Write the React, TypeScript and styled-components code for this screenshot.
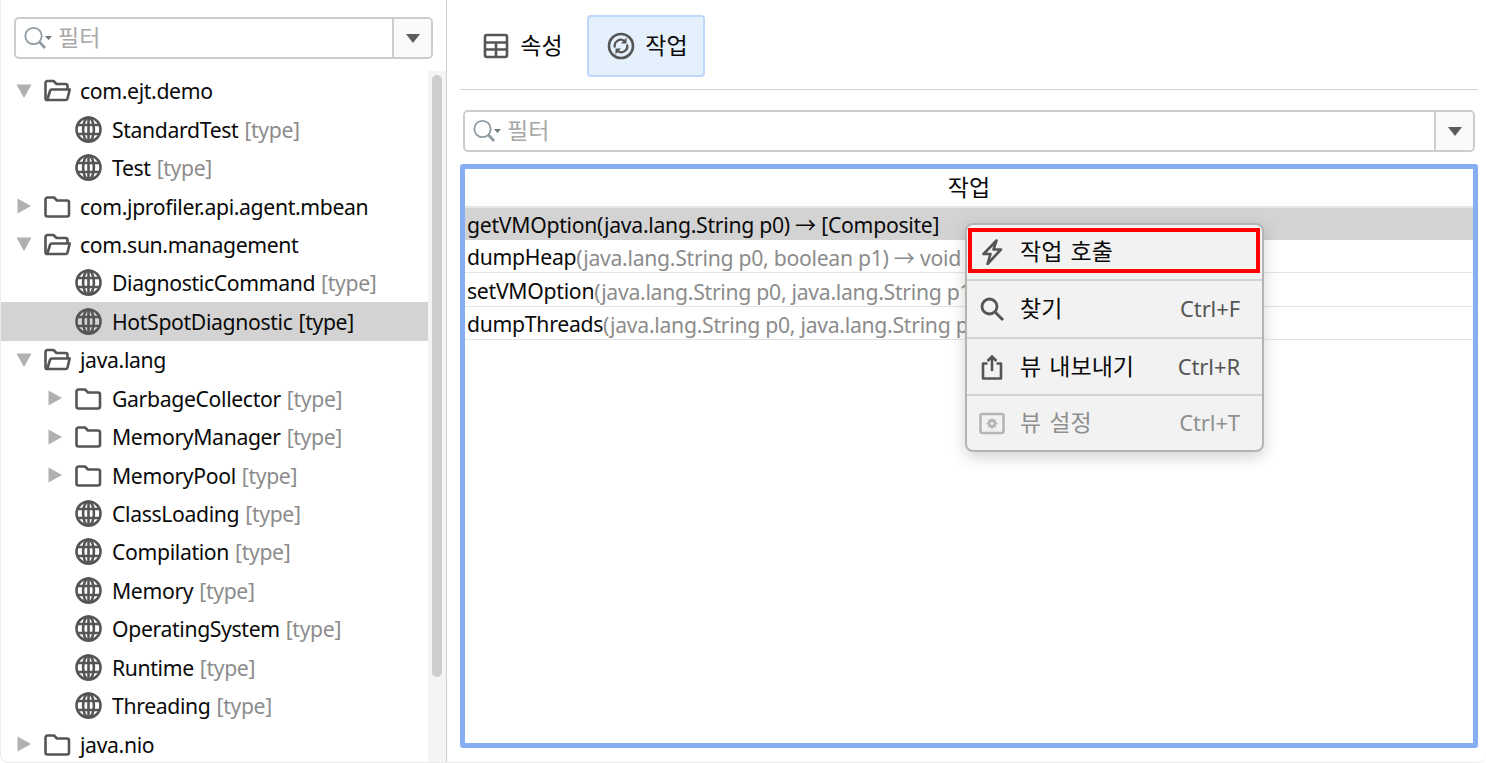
import React from 'react';
import styled, { createGlobalStyle } from 'styled-components';

const Global = createGlobalStyle`
  html, body { margin: 0; padding: 0; background: #fff; overflow: hidden; }
  #root { width: 1486px; height: 763px; }
  * { box-sizing: border-box; }
`;

const FONT = `"Noto Sans", "Noto Sans CJK KR", sans-serif`;
const KR = `"Noto Sans CJK KR", sans-serif`;

const Frame = styled.div`
  position: relative;
  width: 1486px;
  height: 763px;
  display: flex;
  background: #fff;
  font-family: ${FONT};
  font-size: 21.2px;
  letter-spacing: -0.35px;
  color: #0a0a0a;
  border-left: 1px solid #ececec;
  border-bottom: 1px solid #ececec;
  border-radius: 0 8px 8px 8px;
  overflow: hidden;
`;

const Left = styled.aside`
  width: 446px;
  flex: none;
  display: flex;
  flex-direction: column;
  border-right: 1px solid #cfcfcf;
  padding-top: 17px;
`;

const KrLabel = styled.span`
  display: block;
  padding-bottom: 4px;
`;

const FilterBox = styled.div<{ $indent: number }>`
  height: 42px;
  flex: none;
  margin: 0 ${(p) => p.$indent}px;
  display: flex;
  background: #fff;
  border: 2px solid #cdcdcd;
  border-radius: 5px;
  overflow: hidden;
`;

const FilterField = styled.div`
  flex: 1;
  display: flex;
  align-items: center;
  padding-left: 7px;
  gap: 5px;
  color: #a9a9a9;
  font-family: ${KR};
  letter-spacing: 0;
  font-size: 23px;
`;

const FilterDrop = styled.div`
  width: 39px;
  flex: none;
  display: flex;
  align-items: center;
  justify-content: center;
  background: #fafafa;
  border-left: 2px solid #cdcdcd;
`;

const DropArrow = styled.div`
  width: 0;
  height: 0;
  border-left: 7.5px solid transparent;
  border-right: 7.5px solid transparent;
  border-top: 9px solid #5c5c5c;
`;

const TreeArea = styled.div`
  flex: 1;
  display: flex;
  margin-top: 12px;
  min-height: 0;
`;

const Tree = styled.div`
  flex: 1;
  padding-top: 0.5px;
  overflow: hidden;
`;

const Scrollbar = styled.div`
  width: 18px;
  flex: none;
  background: #f4f4f4;
  padding: 4px 4px 0 4px;
`;

const Thumb = styled.div`
  height: 602px;
  background: #cdcdcd;
  border-radius: 5px;
`;

const TreeRow = styled.div<{ $depth: number; $selected?: boolean }>`
  height: 38.45px;
  display: flex;
  align-items: center;
  padding-left: ${(p) => 15 + p.$depth * 31}px;
  background: ${(p) => (p.$selected ? '#d3d3d3' : 'transparent')};
  white-space: nowrap;
`;

const ArrowSlot = styled.span`
  width: 28px;
  flex: none;
  display: flex;
  align-items: center;
`;

const RowIcon = styled.svg<{ $depth: number }>`
  width: 27px;
  height: 27px;
  flex: none;
  margin-right: ${(p) => (p.$depth ? 10 : 9)}px;
  fill: none;
  stroke: #555;
  stroke-width: 2.6;
  stroke-linejoin: round;
`;

const TypeTag = styled.span<{ $selected?: boolean }>`
  color: ${(p) => (p.$selected ? '#0a0a0a' : '#8c8c8c')};
  margin-left: 6px;
`;

const Right = styled.main`
  flex: 1;
  min-width: 0;
  display: flex;
  flex-direction: column;
  padding: 15px 8px 14px 13px;
`;

const TabBar = styled.div`
  height: 75px;
  flex: none;
  display: flex;
  padding-left: 6px;
  gap: 4px;
  border-bottom: 1px solid #d2d2d2;
`;

const Tab = styled.div<{ $active?: boolean }>`
  height: 62px;
  width: ${(p) => (p.$active ? 118 : 117)}px;
  display: flex;
  align-items: center;
  justify-content: center;
  gap: 10px;
  padding-left: ${(p) => (p.$active ? 3 : 0)}px;
  padding-right: ${(p) => (p.$active ? 0 : 4)}px;
  font-family: ${KR};
  letter-spacing: 0;
  font-size: 23px;
  border: 2px solid ${(p) => (p.$active ? '#bcd8fb' : 'transparent')};
  border-radius: 4px;
  background: ${(p) => (p.$active ? '#e5f0fd' : 'transparent')};
`;

const TabIcon = styled.svg`
  width: 28px;
  height: 28px;
  flex: none;
  fill: none;
  stroke: #555;
  stroke-width: 2.6;
  stroke-linejoin: round;
`;

const TabGap = styled.div`
  height: 20px;
  flex: none;
`;

const TableFrame = styled.div`
  flex: 1;
  min-height: 0;
  margin-top: 12px;
  border: 5px solid #85aef5;
  border-radius: 3px;
  background: #fff;
`;

const TableHead = styled.div`
  height: 39px;
  display: flex;
  align-items: center;
  justify-content: center;
  font-family: ${KR};
  letter-spacing: 0;
  font-size: 23px;
  border-bottom: 2px solid #e6e6e6;
`;

const TableRow = styled.div<{ $selected?: boolean }>`
  height: ${(p) => (p.$selected ? 32 : 33.4)}px;
  display: flex;
  align-items: center;
  padding-left: 2px;
  padding-top: ${(p) => (p.$selected ? 0 : 1)}px;
  padding-bottom: ${(p) => (p.$selected ? 2 : 0)}px;
  letter-spacing: -0.28px;
  background: ${(p) => (p.$selected ? '#d3d3d3' : '#fff')};
  border-bottom: ${(p) => (p.$selected ? 'none' : '1.6px solid #e4e4e4')};
  white-space: nowrap;
  overflow: hidden;
`;

const Signature = styled.span`
  color: #8c8c8c;
`;

const Menu = styled.div`
  position: absolute;
  left: 964px;
  top: 223px;
  width: 299px;
  height: 229px;
  display: flex;
  flex-direction: column;
  background: #f2f2f2;
  border: 2px solid #b4b4b4;
  border-radius: 8px;
  box-shadow: 0 5px 16px rgba(0, 0, 0, 0.18);
`;

const MenuItem = styled.div<{ $disabled?: boolean; $h: number }>`
  height: ${(p) => p.$h}px;
  flex: none;
  display: flex;
  align-items: center;
  padding: 0 22px 0 12px;
  font-family: ${KR};
  letter-spacing: 0;
  font-size: 23px;
  word-spacing: 3px;
  color: ${(p) => (p.$disabled ? '#8f8f8f' : '#0a0a0a')};
`;

const MenuIcon = styled.svg<{ $disabled?: boolean }>`
  width: 26px;
  height: 26px;
  flex: none;
  margin-right: 15px;
  fill: none;
  stroke: ${(p) => (p.$disabled ? '#b5b5b5' : '#555')};
  stroke-width: 2.6;
  stroke-linejoin: round;
`;

const Shortcut = styled.span<{ $disabled?: boolean }>`
  margin-left: auto;
  padding-bottom: 2px;
  font-family: ${FONT};
  letter-spacing: -0.1px;
  word-spacing: 0;
  font-size: 22px;
  color: ${(p) => (p.$disabled ? '#8f8f8f' : '#555')};
`;

const MenuSep = styled.div`
  height: 2px;
  flex: none;
  background: #d3d3d3;
`;

const Callout = styled.div`
  position: absolute;
  left: 967px;
  top: 228px;
  width: 292px;
  height: 45px;
  border: 4px solid #ff0000;
`;

const SearchIcon = () => (
  <svg width="30" height="26" viewBox="0 0 30 26" fill="none">
    <circle cx="10.5" cy="11" r="8.2" stroke="#8f9ba1" strokeWidth="1.8" />
    <path d="M16.5 17 L22 23" stroke="#8f9ba1" strokeWidth="2.6" />
    <path d="M22 11 h7 l-3.5 4 z" fill="#6d7a80" />
  </svg>
);

const Filter = ({ indent }: { indent: number }) => (
  <FilterBox $indent={indent}>
    <FilterField>
      <SearchIcon />
      <KrLabel>필터</KrLabel>
    </FilterField>
    <FilterDrop>
      <DropArrow />
    </FilterDrop>
  </FilterBox>
);

const TriangleDown = () => (
  <svg width="16" height="14" viewBox="0 0 16 14">
    <path d="M0.5 0.5 H15.5 L8 14 Z" fill="#b0b0b0" />
  </svg>
);

const TriangleRight = () => (
  <svg width="16" height="16" viewBox="0 0 16 16">
    <path d="M1.5 0.5 L15 8 L1.5 15.5 Z" fill="#b0b0b0" />
  </svg>
);

type Kind = 'open' | 'closed' | 'leaf';

const KindIcon = ({ kind, depth }: { kind: Kind; depth: number }) => {
  if (kind === 'leaf') {
    return (
      <RowIcon $depth={depth} viewBox="0 0 27 27">
        <circle cx="13.5" cy="13.5" r="12" />
        <ellipse cx="13.5" cy="13.5" rx="5.4" ry="12" />
        <path d="M13.5 1.5 V25.5 M2.8 9 H24.2 M2.8 18 H24.2" />
      </RowIcon>
    );
  }
  if (kind === 'closed') {
    return (
      <RowIcon $depth={depth} viewBox="0 0 27 27">
        <path d="M1.5 6.5 a2 2 0 0 1 2-2 h6.5 l3 3 h10 a2 2 0 0 1 2 2 v12 a2 2 0 0 1-2 2 h-19.5 a2 2 0 0 1-2-2 z" />
      </RowIcon>
    );
  }
  return (
    <RowIcon $depth={depth} viewBox="0 0 27 27">
      <path d="M2.5 23 a1.5 1.5 0 0 1-1-1.5 V6 a2 2 0 0 1 2-2 h6 l3 3 h9 a2 2 0 0 1 2 2 v3" />
      <path d="M2.5 23 H21.5 a2 2 0 0 0 2-1.4 L25.7 12.5 H8 a2 2 0 0 0-2 1.5 L3.5 22 a1 1 0 0 1-1 1 z" />
    </RowIcon>
  );
};

const treeItems: { name: string; depth: number; kind: Kind; arrow?: 'down' | 'right'; type?: boolean; selected?: boolean }[] = [
  { name: 'com.ejt.demo', depth: 0, kind: 'open', arrow: 'down' },
  { name: 'StandardTest', depth: 1, kind: 'leaf', type: true },
  { name: 'Test', depth: 1, kind: 'leaf', type: true },
  { name: 'com.jprofiler.api.agent.mbean', depth: 0, kind: 'closed', arrow: 'right' },
  { name: 'com.sun.management', depth: 0, kind: 'open', arrow: 'down' },
  { name: 'DiagnosticCommand', depth: 1, kind: 'leaf', type: true },
  { name: 'HotSpotDiagnostic', depth: 1, kind: 'leaf', type: true, selected: true },
  { name: 'java.lang', depth: 0, kind: 'open', arrow: 'down' },
  { name: 'GarbageCollector', depth: 1, kind: 'closed', arrow: 'right', type: true },
  { name: 'MemoryManager', depth: 1, kind: 'closed', arrow: 'right', type: true },
  { name: 'MemoryPool', depth: 1, kind: 'closed', arrow: 'right', type: true },
  { name: 'ClassLoading', depth: 1, kind: 'leaf', type: true },
  { name: 'Compilation', depth: 1, kind: 'leaf', type: true },
  { name: 'Memory', depth: 1, kind: 'leaf', type: true },
  { name: 'OperatingSystem', depth: 1, kind: 'leaf', type: true },
  { name: 'Runtime', depth: 1, kind: 'leaf', type: true },
  { name: 'Threading', depth: 1, kind: 'leaf', type: true },
  { name: 'java.nio', depth: 0, kind: 'closed', arrow: 'right' },
];

const ops = [
  { name: 'getVMOption', sig: '(java.lang.String p0) → [Composite]', selected: true },
  { name: 'dumpHeap', sig: '(java.lang.String p0, boolean p1) → void' },
  { name: 'setVMOption', sig: '(java.lang.String p0, java.lang.String p1) → void' },
  { name: 'dumpThreads', sig: '(java.lang.String p0, java.lang.String p1) → void' },
];

export default function App() {
  return (
    <>
      <Global />
      <Frame>
        <Left>
          <Filter indent={13} />
          <TreeArea>
            <Tree>
              {treeItems.map((it) => (
                <TreeRow key={it.name} $depth={it.depth} $selected={it.selected}>
                  <ArrowSlot>
                    {it.arrow === 'down' && <TriangleDown />}
                    {it.arrow === 'right' && <TriangleRight />}
                  </ArrowSlot>
                  <KindIcon kind={it.kind} depth={it.depth} />
                  {it.name}
                  {it.type && <TypeTag $selected={it.selected}>[type]</TypeTag>}
                </TreeRow>
              ))}
            </Tree>
            <Scrollbar>
              <Thumb />
            </Scrollbar>
          </TreeArea>
        </Left>
        <Right>
          <TabBar>
            <Tab>
              <TabIcon viewBox="0 0 28 28">
                <rect x="3" y="3" width="22" height="22" rx="2" />
                <path d="M3 10.5 H25 M3 17.5 H25 M14 10.5 V25" />
              </TabIcon>
              <KrLabel>속성</KrLabel>
            </Tab>
            <Tab $active>
              <TabIcon viewBox="0 0 28 28">
                <circle cx="14" cy="14" r="12" />
                <path d="M8 15.5 a6 6 0 0 1 9.5-6.4" strokeWidth="2.2" />
                <path d="M20 12.5 a6 6 0 0 1-9.5 6.4" strokeWidth="2.2" />
                <path d="M19.5 5.5 V11.5 H14 Z M8.5 22.5 V16.5 H14 Z" fill="#555" stroke="none" />
              </TabIcon>
              <KrLabel>작업</KrLabel>
            </Tab>
          </TabBar>
          <TabGap />
          <Filter indent={3} />
          <TableFrame>
            <TableHead>
              <KrLabel>작업</KrLabel>
            </TableHead>
            {ops.map((o) => (
              <TableRow key={o.name} $selected={o.selected}>
                {o.name}
                {o.selected ? o.sig : <Signature>{o.sig}</Signature>}
              </TableRow>
            ))}
          </TableFrame>
        </Right>
        <Menu>
          <MenuItem $h={54}>
            <MenuIcon viewBox="0 0 26 26">
              <path d="M17.5 1.5 L4.5 15 H11.5 L8.5 25 L22 10.5 H14.5 Z" />
            </MenuIcon>
            <KrLabel>작업 호출</KrLabel>
          </MenuItem>
          <MenuSep />
          <MenuItem $h={56}>
            <MenuIcon viewBox="0 0 26 26">
              <circle cx="10.5" cy="10.5" r="7.5" strokeWidth="2.8" />
              <path d="M16 16 L24 24" strokeWidth="3" />
            </MenuIcon>
            <KrLabel>찾기</KrLabel>
            <Shortcut>Ctrl+F</Shortcut>
          </MenuItem>
          <MenuSep />
          <MenuItem $h={55}>
            <MenuIcon viewBox="0 0 26 26">
              <path d="M8.5 9.5 H4 V24.5 H22 V9.5 H17.5" />
              <path d="M13 17 V2.5 M8.5 7 L13 2.5 L17.5 7" />
            </MenuIcon>
            <KrLabel>뷰 내보내기</KrLabel>
            <Shortcut>Ctrl+R</Shortcut>
          </MenuItem>
          <MenuSep />
          <MenuItem $disabled $h={54}>
            <MenuIcon $disabled viewBox="0 0 26 26">
              <rect x="1.5" y="4" width="23" height="19" rx="1.5" />
              <circle cx="13" cy="13.5" r="4.2" fill="#b5b5b5" stroke="none" />
              <path d="M13 8 V19 M7.5 13.5 H18.5 M9.2 9.7 L16.8 17.3 M16.8 9.7 L9.2 17.3" strokeWidth="1.6" />
              <circle cx="13" cy="13.5" r="1.6" fill="#f2f2f2" stroke="none" />
            </MenuIcon>
            <KrLabel>뷰 설정</KrLabel>
            <Shortcut $disabled>Ctrl+T</Shortcut>
          </MenuItem>
        </Menu>
        <Callout />
      </Frame>
    </>
  );
}
